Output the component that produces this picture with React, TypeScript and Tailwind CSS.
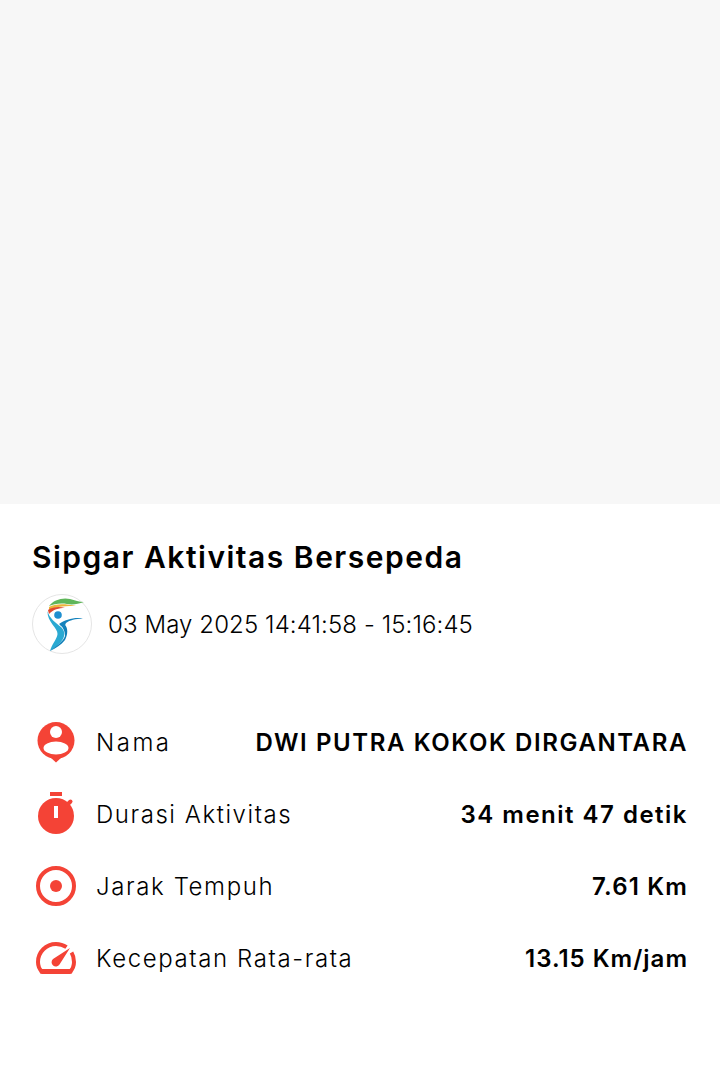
const rows = [
  { icon: <PersonIcon />, label: "Nama", labelClass: "tracking-[2.5px]", value: "DWI PUTRA KOKOK DIRGANTARA", valueClass: "tracking-[1.6px]" },
  { icon: <TimerIcon />, label: "Durasi Aktivitas", labelClass: "tracking-[1.55px]", value: "34 menit 47 detik", valueClass: "tracking-[1.5px]" },
  { icon: <TargetIcon />, label: "Jarak Tempuh", labelClass: "tracking-[1.6px]", value: "7.61 Km", valueClass: "tracking-[1.15px]" },
  { icon: <GaugeIcon />, label: "Kecepatan Rata-rata", labelClass: "tracking-[1.6px]", value: "13.15 Km/jam", valueClass: "tracking-[1px]" },
];

function PersonIcon() {
  return (
    <svg width="48" height="48" viewBox="0 0 48 48">
      <circle cx="24" cy="22.500" r="18.500" fill="#f44336" />
      <path d="M18 39 L24 44.500 L30 39 Z" fill="#f44336" />
      <circle cx="24" cy="14" r="6" fill="#fff" />
      <ellipse cx="24" cy="30" rx="12.500" ry="6.500" fill="#fff" />
    </svg>
  );
}

function TimerIcon() {
  return (
    <svg width="48" height="48" viewBox="0 0 48 48">
      <rect x="18" y="2" width="12" height="4" fill="#f44336" />
      <circle cx="24" cy="26" r="18" fill="#f44336" />
      <path d="M35 15 L38.500 11.500" stroke="#f44336" strokeWidth="4" strokeLinecap="round" />
      <rect x="22" y="16" width="4" height="12" fill="#fff" />
    </svg>
  );
}

function TargetIcon() {
  return (
    <svg width="48" height="48" viewBox="0 0 48 48">
      <circle cx="24" cy="24" r="18" fill="none" stroke="#f44336" strokeWidth="4" />
      <circle cx="24" cy="24" r="6" fill="#f44336" />
    </svg>
  );
}

function GaugeIcon() {
  return (
    <svg width="48" height="48" viewBox="0 0 48 48">
      <path
        d="M10 37.500 C7 35 6 32 6 28 A18 18 0 0 1 24 10 C28 10 31.500 11.200 34.500 13.200"
        fill="none"
        stroke="#f44336"
        strokeWidth="4"
      />
      <path
        d="M39.500 18.500 C41.200 21.200 42 24.500 42 28 C42 32 41 35 38 37.500"
        fill="none"
        stroke="#f44336"
        strokeWidth="4"
      />
      <path d="M10 37.500 H38" stroke="#f44336" strokeWidth="5" strokeLinecap="round" />
      <path d="M38 14 L27.500 30.500 A4.300 4.300 0 1 1 21 25 Z" fill="#f44336" />
    </svg>
  );
}

function Logo() {
  return (
    <svg width="60" height="60" viewBox="0 0 60 60" className="shrink-0">
      <circle cx="30" cy="30" r="29.500" fill="#fff" stroke="#e5e5e5" />
      <path d="M17 12 C21 6 31 3 38 5 C43 6 47 8 52 8 C46 10 41 11 35 10 C28 9 22 10 17 12 Z" fill="#5fb65a" />
      <path d="M17 13 C23 9.500 33 9.500 44 12 C36 12 24 12 17 16 Z" fill="#ecb53a" />
      <path d="M16 16 C21 12.500 28 12.500 33 14 C27 14 21 15.500 17 20 Z" fill="#e0492f" />
      <circle cx="26" cy="21" r="3.800" fill="#1f8fd0" />
      <path d="M15.500 17 C17 24 24 29 29 33 C33 37 33 41 31 45 C28 50 23 54 18 57 C20 50 25 45 25.500 40 C26 34 15 28 15.500 17 Z" fill="#2aa9d2" />
      <path d="M18 57 C24 52 31 48 33 42 C33 37 31 33 28 31 L33 31 C36 34 36 40 33 46 C29 51 24 54 18 57 Z" fill="#0f7fb8" />
      <path d="M27 30 C33 26 42 23 51 24.500 C43 25 38 26 34 29 C33 31 33 32 33 34 C31 33 29 32 27 30 Z" fill="#1583bd" />
    </svg>
  );
}

export default function App() {
  return (
    <div className="flex min-h-[1080px] flex-col bg-white font-['Inter',sans-serif] text-black">
      <div className="h-[504px] bg-[#f7f7f7]" />
      <div className="px-8 pt-[35px]">
        <h1 className="text-[30px] font-semibold leading-9 tracking-[1.5px]">Sipgar Aktivitas Bersepeda</h1>
        <div className="mt-[19px] flex items-center gap-4">
          <Logo />
          <span className="pt-0.5 text-[24px] font-light tracking-[0.1px]">03 May 2025 14:41:58 - 15:16:45</span>
        </div>
        <div className="mt-[64px] flex flex-col gap-6">
          {rows.map((row) => (
            <div key={row.label} className="flex h-12 items-center">
              <div className="w-16 shrink-0">{row.icon}</div>
              <span className={`pt-0.5 text-[24px] font-light ${row.labelClass}`}>{row.label}</span>
              <span className={`ml-auto pt-0.5 text-[24px] font-semibold ${row.valueClass}`}>{row.value}</span>
            </div>
          ))}
        </div>
      </div>
    </div>
  );
}
